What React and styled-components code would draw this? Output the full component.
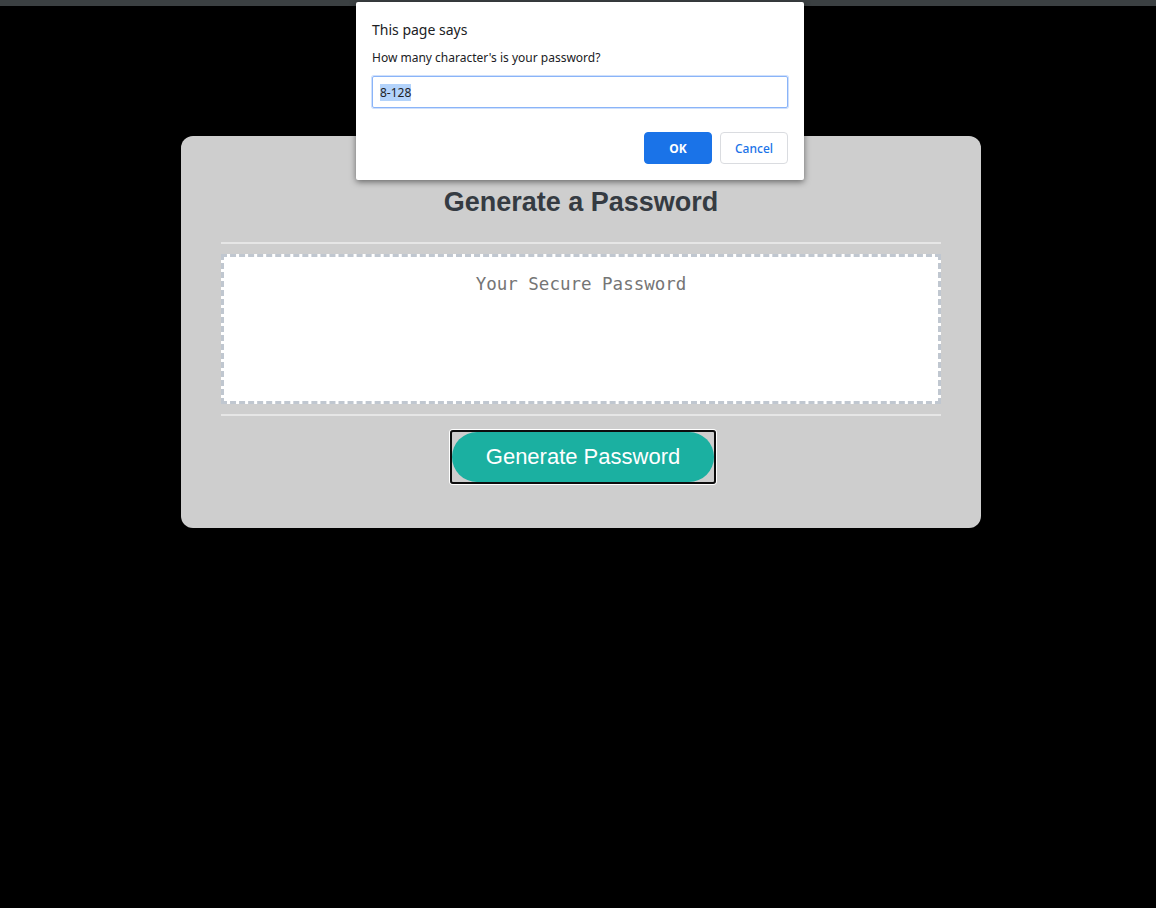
import React from "react";
import styled, { createGlobalStyle } from "styled-components";

const Global = createGlobalStyle`
  html, body { margin: 0; padding: 0; background: #000; }
  body { font-family: Arial, "Liberation Sans", sans-serif; min-height: 908px; }
`;

const TopBar = styled.div`
  height: 6px;
  background: #3b4042;
`;

const Page = styled.main`
  padding: 130px 0 0 6px;
`;

const Card = styled.div`
  width: 800px;
  box-sizing: border-box;
  margin: 0 auto;
  padding: 50px 40px 44px;
  background: #cecece;
  border-radius: 12px;
  display: flex;
  flex-direction: column;
  align-items: stretch;
`;

const Title = styled.h2`
  margin: 0;
  font-family: "Liberation Sans", Arial, sans-serif;
  font-size: 27px;
  line-height: 32px;
  font-weight: bold;
  color: #353b42;
  text-align: center;
`;

const Rule = styled.hr`
  margin: ${(p) => p.$top}px 0 ${(p) => p.$bottom}px;
  border: 0;
  height: 2px;
  background: #e6e6e6;
`;

const PasswordBox = styled.textarea`
  display: block;
  box-sizing: border-box;
  width: 100%;
  height: 150px;
  resize: none;
  padding: 17px 16px;
  border: 3px dashed #c0c7d0;
  background: #fff;
  font-family: "DejaVu Sans Mono", "Liberation Mono", monospace;
  font-size: 17.5px;
  text-align: center;
  outline: none;
  &::placeholder { color: #757575; }
`;

const Footer = styled.div`
  display: flex;
  justify-content: center;
  padding-left: 4px;
`;

const FocusRing = styled.span`
  display: inline-flex;
  border: 2px solid #0d0d0d;
  border-radius: 3px;
  box-shadow: 0 0 0 1px #fff;
`;

const GenerateButton = styled.button`
  border: 0;
  margin: 0;
  padding: 0 34px;
  height: 50px;
  border-radius: 25px;
  background: #1bb0a1;
  color: #fff;
  font-family: "Liberation Sans", Arial, sans-serif;
  font-size: 22px;
  cursor: pointer;
  outline: none;
`;

const Dialog = styled.div`
  position: absolute;
  top: 2px;
  left: 356px;
  width: 448px;
  height: 178px;
  box-sizing: border-box;
  padding: 18px 16px 16px;
  background: #fff;
  border-radius: 2px;
  box-shadow: 0 2px 6px rgba(0, 0, 0, 0.5);
  font-family: "Noto Sans", "Open Sans", sans-serif;
  color: #202124;
  display: flex;
  flex-direction: column;
`;

const DialogTitle = styled.div`
  font-size: 14px;
  line-height: 20px;
`;

const DialogMessage = styled.div`
  margin-top: 10px;
  font-size: 12px;
  line-height: 16px;
`;

const PromptInput = styled.div`
  margin-top: 10px;
  height: 32px;
  box-sizing: border-box;
  border: 1px solid #8ab4f8;
  box-shadow: 0 0 0 1px #cfe0fc;
  border-radius: 2px;
  padding: 0 7px;
  display: flex;
  align-items: center;
  font-size: 12px;
`;

const Selected = styled.span`
  background: #b3d3fb;
  color: #202124;
`;

const DialogActions = styled.div`
  margin-top: 24px;
  display: flex;
  justify-content: flex-end;
  gap: 8px;
`;

const DialogButton = styled.button`
  width: 68px;
  height: 32px;
  box-sizing: border-box;
  border-radius: 4px;
  font-family: "Noto Sans", "Open Sans", sans-serif;
  font-size: 12px;
  font-weight: ${(p) => (p.$primary ? 700 : 500)};
  background: ${(p) => (p.$primary ? "#1a73e8" : "#fff")};
  color: ${(p) => (p.$primary ? "#fff" : "#1a73e8")};
  border: 1px solid ${(p) => (p.$primary ? "#1a73e8" : "#dadce0")};
  cursor: pointer;
`;

export default function App() {
  return (
    <>
      <Global />
      <TopBar />
      <Page>
        <Card>
          <Title>Generate a Password</Title>
          <Rule $top={24} $bottom={10} />
          <PasswordBox placeholder="Your Secure Password" readOnly />
          <Rule $top={10} $bottom={14} />
          <Footer>
            <FocusRing>
              <GenerateButton>Generate Password</GenerateButton>
            </FocusRing>
          </Footer>
        </Card>
      </Page>
      <Dialog>
        <DialogTitle>This page says</DialogTitle>
        <DialogMessage>How many character's is your password?</DialogMessage>
        <PromptInput>
          <Selected>8-128</Selected>
        </PromptInput>
        <DialogActions>
          <DialogButton $primary>OK</DialogButton>
          <DialogButton>Cancel</DialogButton>
        </DialogActions>
      </Dialog>
    </>
  );
}
